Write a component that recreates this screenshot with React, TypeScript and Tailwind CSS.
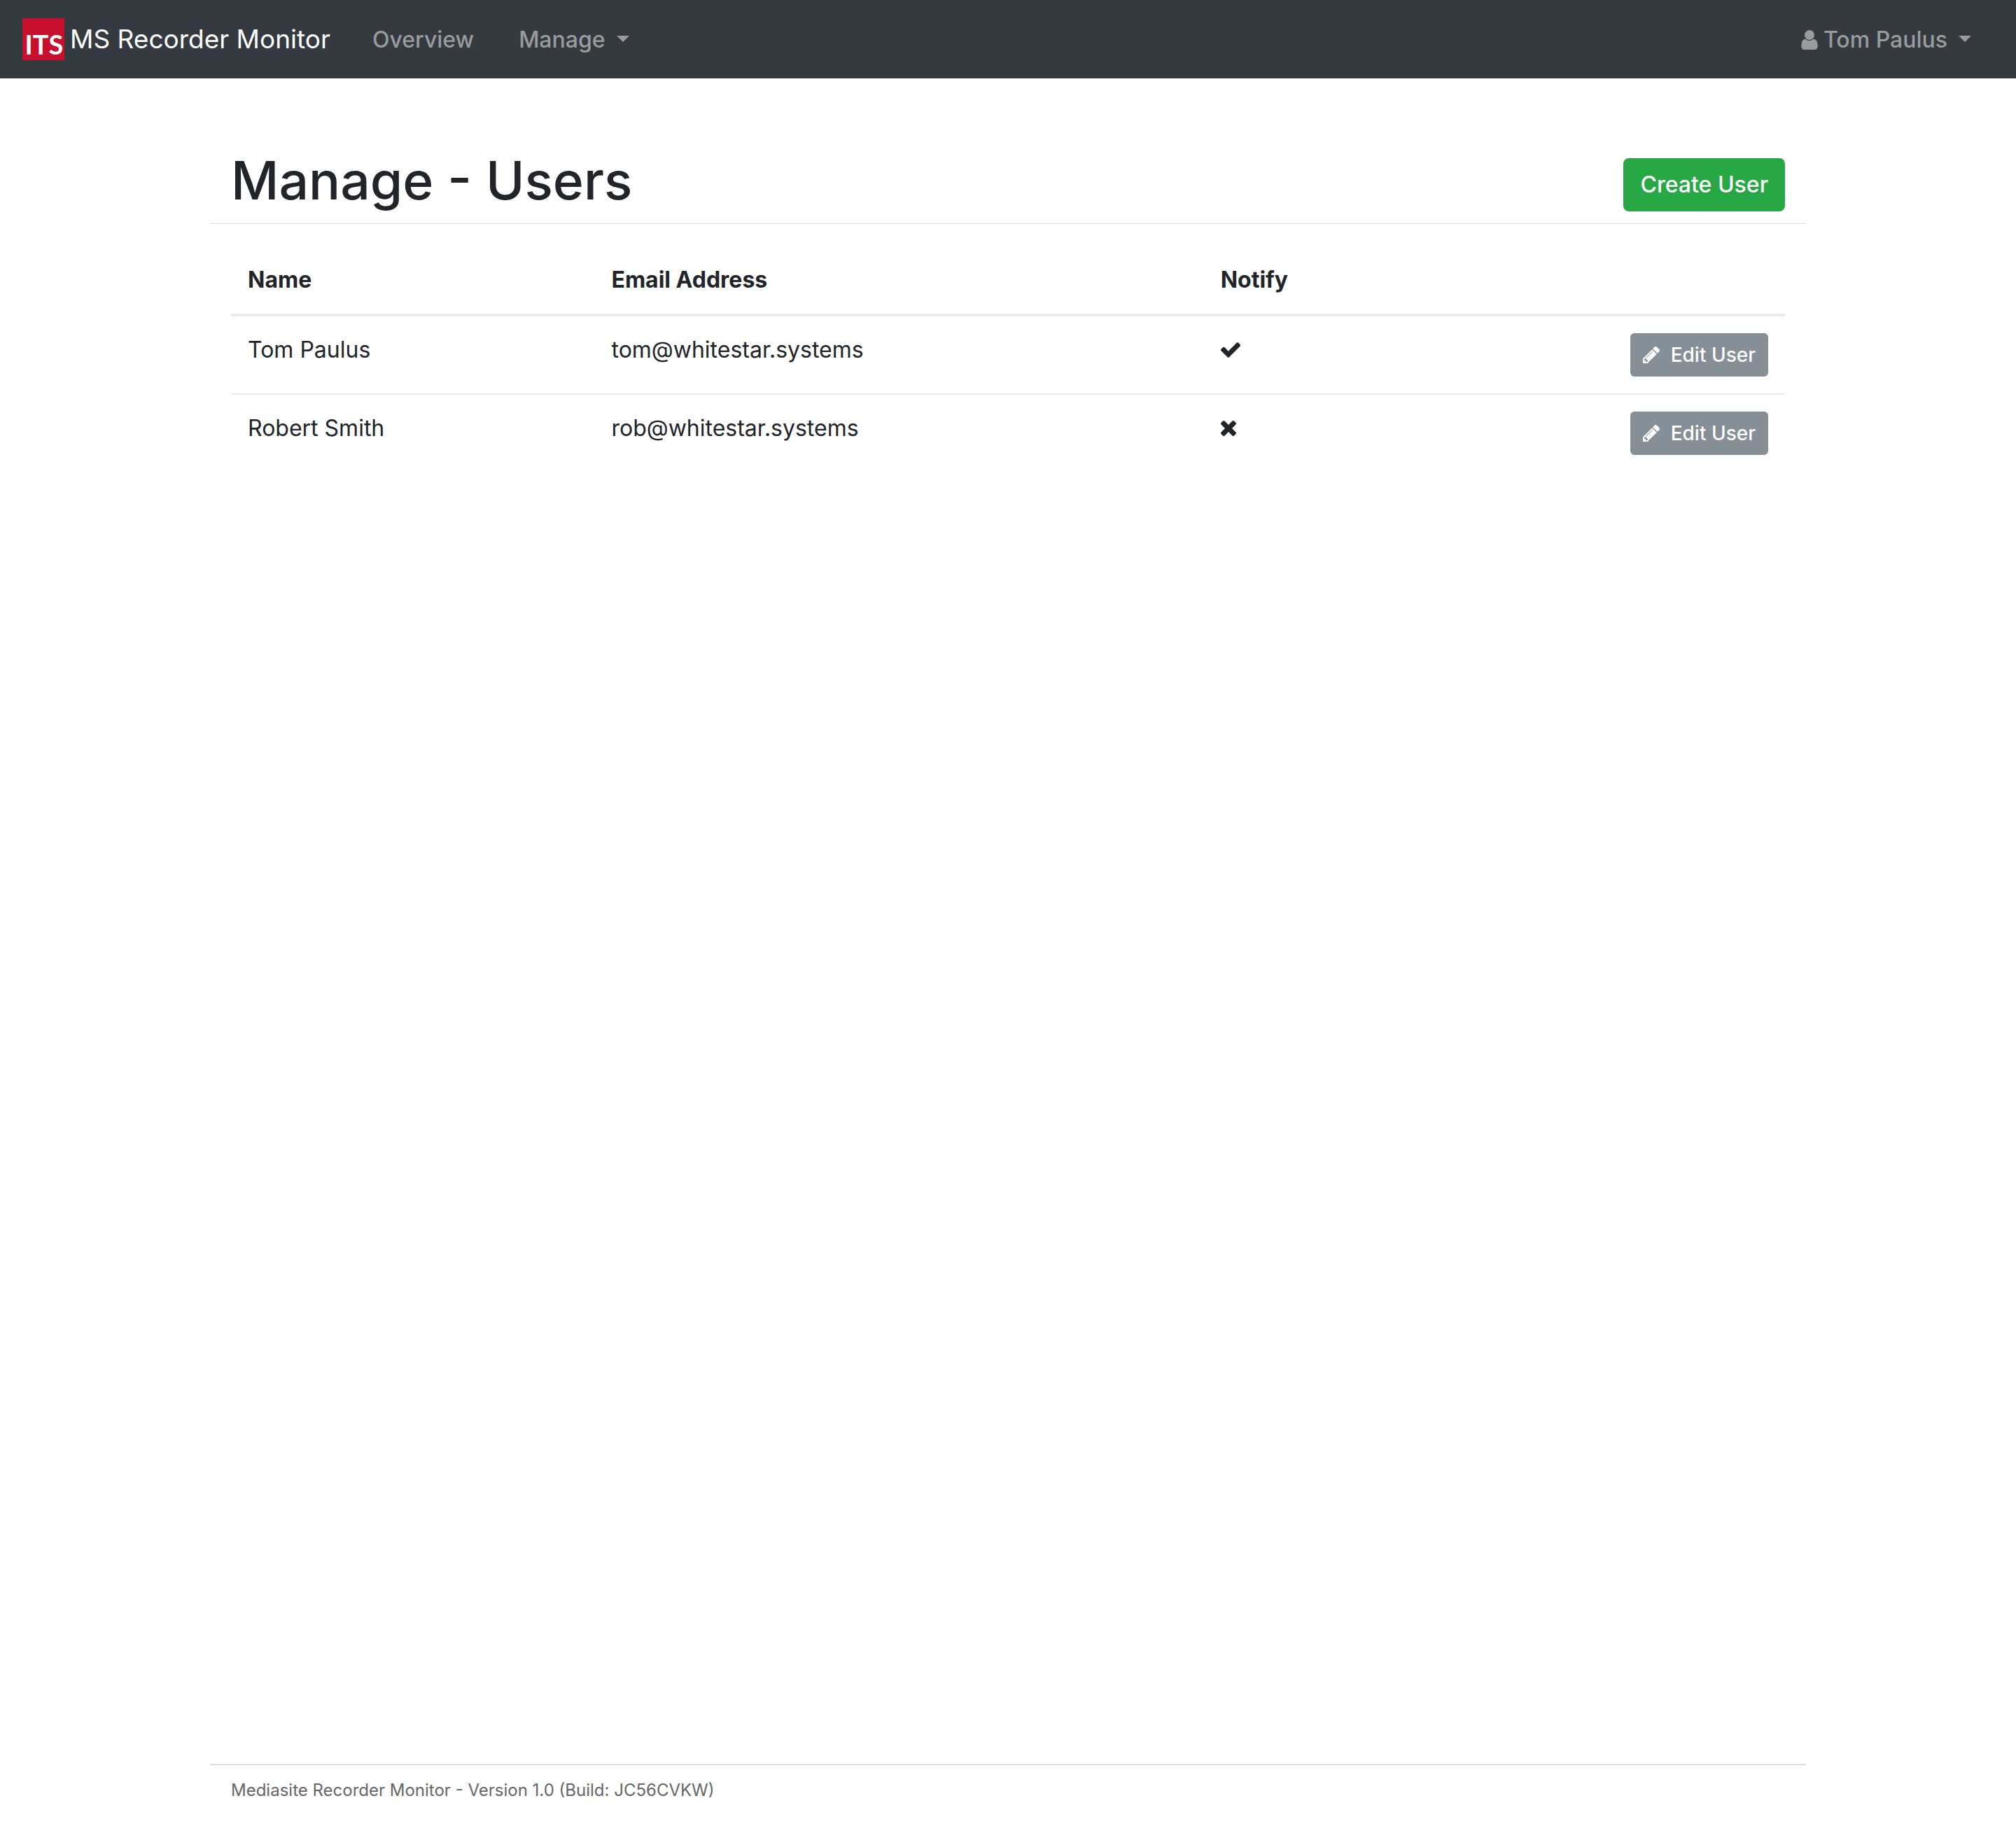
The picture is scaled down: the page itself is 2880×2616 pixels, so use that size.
import React from "react";

type IconProps = { className?: string };

function UserIcon({ className }: IconProps) {
  return (
    <svg viewBox="256 128 1280 1536" fill="currentColor" aria-hidden="true" className={className}>
      <path d="M1536 1399q0 109-62.5 187t-150.5 78h-854q-88 0-150.5-78t-62.5-187q0-85 8.5-160.5t31.5-152 58.5-131 94-89 134.5-34.5q131 128 313 128t313-128q76 0 134.5 34.5t94 89 58.5 131 31.5 152 8.5 160.5zm-256-887q0 159-112.5 271.5t-271.5 112.5-271.5-112.5-112.5-271.5 112.5-271.5 271.5-112.5 271.5 112.5 112.5 271.5z" />
    </svg>
  );
}

function PencilIcon({ className }: IconProps) {
  return (
    <svg viewBox="128 149 1515 1515" fill="currentColor" aria-hidden="true" className={className}>
      <path d="M491 1536l91-91-235-235-91 91v107h128v128h107zm523-928q0-22-22-22-10 0-17 7l-542 542q-7 7-7 17 0 22 22 22 10 0 17-7l542-542q7-7 7-17zm-54-192l416 416-832 832h-416v-416zm683 96q0 53-37 90l-166 166-416-416 166-165q36-38 90-38 53 0 91 38l235 234q37 39 37 91z" />
    </svg>
  );
}

function CheckIcon({ className }: IconProps) {
  return (
    <svg viewBox="121 334 1550 1188" fill="currentColor" role="img" aria-label="Yes" className={className}>
      <path d="M1671 566q0 40-28 68l-724 724-136 136q-28 28-68 28t-68-28l-136-136-362-362q-28-28-28-68t28-68l136-136q28-28 68-28t68 28l294 295 656-657q28-28 68-28t68 28l136 136q28 28 28 68z" />
    </svg>
  );
}

function TimesIcon({ className }: IconProps) {
  return (
    <svg viewBox="302 366 1188 1188" fill="currentColor" role="img" aria-label="No" className={className}>
      <path d="M1490 1322q0 40-28 68l-136 136q-28 28-68 28t-68-28l-294-294-294 294q-28 28-68 28t-68-28l-136-136q-28-28-28-68t28-68l294-294-294-294q-28-28-28-68t28-68l136-136q28-28 68-28t68 28l294 294 294-294q28-28 68-28t68 28l136 136q28 28 28 68t-28 68l-294 294 294 294q28 28 28 68z" />
    </svg>
  );
}

function Logo() {
  return (
    <svg viewBox="0 0 60 60" aria-hidden="true" className="size-15 shrink-0">
      <rect width="60" height="60" fill="#c8102e" />
      <text
        x="31"
        y="52"
        textAnchor="middle"
        fill="#fff"
        className="font-['Lato',sans-serif] text-[38px] font-bold"
      >
        ITS
      </text>
    </svg>
  );
}

function Caret() {
  return (
    <span className="mb-1 size-0 border-x-[9px] border-t-[9px] border-x-transparent border-t-current" />
  );
}

const users = [
  { name: "Tom Paulus", email: "tom@whitestar.systems", notify: true },
  { name: "Robert Smith", email: "rob@whitestar.systems", notify: false },
];

export default function App() {
  return (
    <div className="flex min-h-screen flex-col bg-white font-['Inter',sans-serif] text-[32px] leading-12 text-[#212529]">
      <header className="flex h-28 items-center bg-[#343a40] px-8 font-medium text-[#999c9f]">
        <a href="#" className="mr-7 flex items-center gap-2 text-[37px] font-normal text-white">
          <Logo />
          MS Recorder Monitor
        </a>
        <nav className="flex grow items-center pt-0.5">
          <a href="#overview" className="px-8">Overview</a>
          <button type="button" className="flex items-center gap-4 px-8">
            Manage
            <Caret />
          </button>
          <button type="button" className="ml-auto flex items-center px-8">
            <UserIcon className="mr-2 h-7 w-6" />
            <span className="mr-4">Tom Paulus</span>
            <Caret />
          </button>
        </nav>
      </header>

      <main className="mx-auto w-full max-w-[2280px] grow pt-[102px]">
        <div className="flex items-end justify-between border-b border-[#dddddd] px-[30px] pb-[17px]">
          <h1 className="text-[75px] leading-[88px] font-medium">Manage - Users</h1>
          <button type="button" className="h-19 rounded-lg bg-[#28a745] px-6 font-medium text-white">
            Create User
          </button>
        </div>

        <div className="px-[30px] pt-8">
          <table className="w-full table-fixed border-collapse text-left">
            <thead>
              <tr className="border-b-4 border-[#e9ecef]">
                <th scope="col" className="w-[23.4%] p-6 font-bold">Name</th>
                <th scope="col" className="w-[39.2%] p-6 font-bold">Email Address</th>
                <th scope="col" className="p-6 font-bold">Notify</th>
                <th scope="col" className="p-6" aria-label="Actions" />
              </tr>
            </thead>
            <tbody>
              {users.map((user) => (
                <tr key={user.email} className="border-b-2 border-[#e9ecef] align-top last:border-b-0">
                  <td className="p-6">{user.name}</td>
                  <td className="p-6">{user.email}</td>
                  <td className="p-6">
                    <div className="flex h-12 items-center">
                      {user.notify ? <CheckIcon className="h-[22px] w-7" /> : <TimesIcon className="size-[22px]" />}
                    </div>
                  </td>
                  <td className="p-6">
                    <button
                      type="button"
                      className="ml-auto flex h-[62px] items-center gap-4 rounded-md bg-[#868e96] px-[18px] text-[28px] font-medium text-white"
                    >
                      <PencilIcon className="size-6" />
                      Edit User
                    </button>
                  </td>
                </tr>
              ))}
            </tbody>
          </table>
        </div>
      </main>

      <footer className="mx-auto w-full max-w-[2280px] border-t-2 border-[#dddddd] px-[30px] pt-4 pb-[38px] text-2xl leading-10 text-[#666666]">
        Mediasite Recorder Monitor - Version 1.0 (Build: JC56CVKW)
      </footer>
    </div>
  );
}
